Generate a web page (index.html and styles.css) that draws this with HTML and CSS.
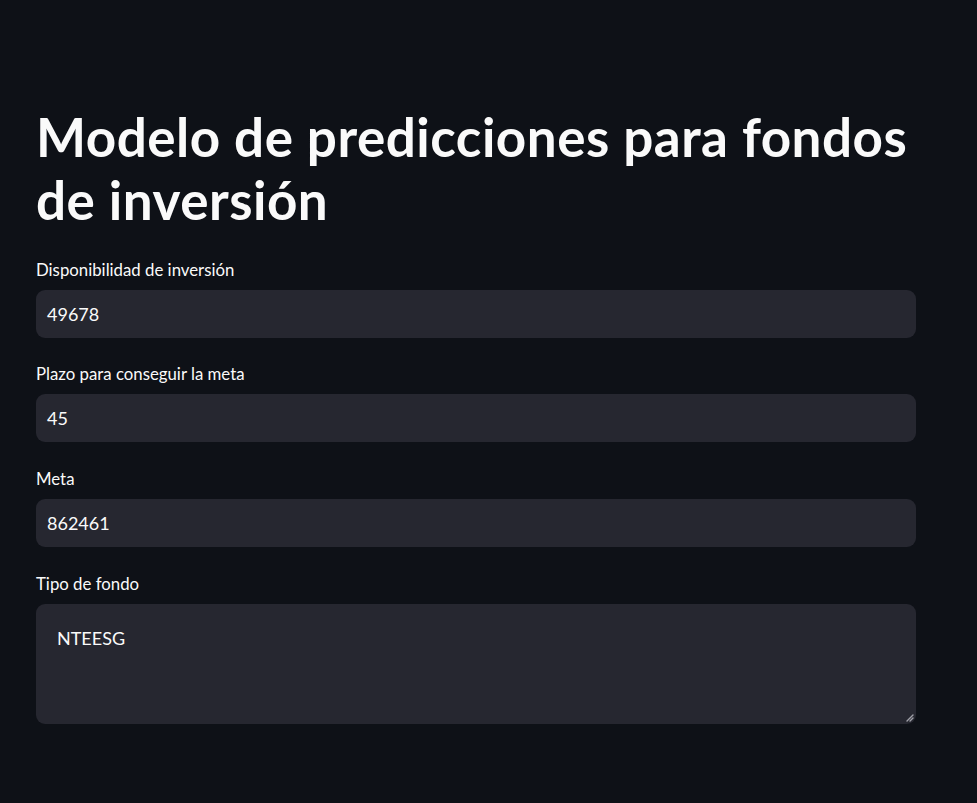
FILE: index.html
```html
<!DOCTYPE html>
<html lang="es">
<head>
<meta charset="utf-8">
<title>Modelo de predicciones</title>
<link rel="stylesheet" href="styles.css">
</head>
<body>
<main class="app">
  <h1 class="title">Modelo de predicciones para fondos de inversión</h1>
  <div class="field">
    <div class="label">Disponibilidad de inversión</div>
    <div class="input">49678</div>
  </div>
  <div class="field">
    <div class="label">Plazo para conseguir la meta</div>
    <div class="input">45</div>
  </div>
  <div class="field">
    <div class="label">Meta</div>
    <div class="input">862461</div>
  </div>
  <div class="field">
    <div class="label">Tipo de fondo</div>
    <div class="textarea">NTEESG
      <svg class="grip" width="8" height="8" viewBox="0 0 8 8"><path d="M7 1 L1 7 M7 4 L4 7" stroke="#a0a0a8" stroke-width="1.4" stroke-linecap="round"/></svg>
    </div>
  </div>
</main>
</body>
</html>
```
FILE: styles.css
```css
html, body {
  margin: 0;
  padding: 0;
  background: #0e1117;
}
body {
  color: #fafafa;
  font-family: "Lato", "Noto Sans", sans-serif;
  min-height: 803px;
}
.app {
  width: 880px;
  margin-left: 36px;
  padding-top: 105px;
  display: flex;
  flex-direction: column;
  gap: 21.7px;
}
.title {
  margin: 0;
  font-size: 53px;
  line-height: 63px;
  font-weight: 700;
  letter-spacing: 0.5px;
  padding-bottom: 2px;
}
.field {
  display: flex;
  flex-direction: column;
  gap: 5px;
}
.label {
  font-size: 16.8px;
  line-height: 30px;
  height: 30px;
}
.input {
  height: 48px;
  background: #262730;
  border-radius: 9px;
  box-sizing: border-box;
  padding: 0 11px;
  display: flex;
  align-items: center;
  font-size: 18px;
}
.textarea {
  position: relative;
  height: 120px;
  background: #262730;
  border-radius: 9px;
  box-sizing: border-box;
  padding: 20px 21px;
  font-size: 18px;
  line-height: 28px;
}
.grip {
  position: absolute;
  right: 2px;
  bottom: 2px;
}
```
